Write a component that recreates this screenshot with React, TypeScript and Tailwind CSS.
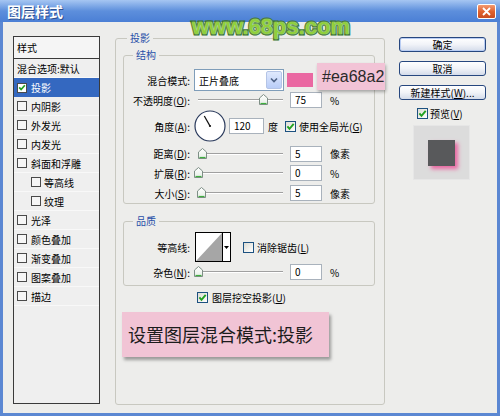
import React from "react";

const Check = ({ checked, list }: { checked?: boolean; list?: boolean }) => (
  <span
    className={
      list
        ? `w-[10px] h-[10px] border border-[#4a4a4a] ${checked ? "bg-white" : "bg-[#f6f6f6]"} flex items-center justify-center shrink-0`
        : "w-[11px] h-[11px] border border-[#1c5180] bg-gradient-to-br from-[#dcdcd4] to-white flex items-center justify-center shrink-0"
    }
  >
    {checked && (
      <svg width="9" height="9" viewBox="0 0 9 9">
        <path d="M1.4 4.4 L3.5 6.8 L7.7 1.9" fill="none" stroke="#21a121" strokeWidth="1.9" />
      </svg>
    )}
  </span>
);

const Slider = ({ pos }: { pos: number }) => (
  <div className="relative w-[92px] h-[16px] shrink-0">
    <div className="absolute left-[4px] right-[3px] top-[7px] h-[2px] border-t border-[#a0a0a0] border-b border-b-white" />
    <svg className="absolute top-[2px]" style={{ left: pos - 4.5 }} width="9" height="11" viewBox="0 0 9 11">
      <defs>
        <linearGradient id="tg" x1="0" y1="0" x2="0" y2="1">
          <stop offset="0" stopColor="#ffffff" />
          <stop offset="1" stopColor="#e6eee6" />
        </linearGradient>
      </defs>
      <path d="M0.5 10.5 V4 L4.5 0.5 L8.5 4 V10.5 Z" fill="url(#tg)" stroke="#7e8f86" />
      <path d="M1.5 9.5 H7.5" stroke="#3fae3f" strokeWidth="1.2" />
    </svg>
  </div>
);

const Input = ({ v, w = "w-[32px]" }: { v: string; w?: string }) => (
  <div className={`${w} h-[16px] border border-[#a9b2bc] bg-white pl-[4px] text-[10px] leading-[14px] shrink-0`}>{v}</div>
);

const Label = ({ children }: { children: React.ReactNode }) => (
  <span className="w-[66px] text-right shrink-0 whitespace-nowrap">{children}</span>
);

const Btn = ({ children, cls = "" }: { children: React.ReactNode; cls?: string }) => (
  <div
    className={`h-[15px] w-[87px] rounded-[3px] border border-[#27477f] bg-gradient-to-b from-[#ffffff] via-[#f1f3f8] to-[#d4dcea] flex items-center justify-center text-[10px] leading-none whitespace-nowrap ${cls}`}
  >
    {children}
  </div>
);

export default function App() {
  return (
    <div className="w-[500px] h-[416px] relative overflow-hidden font-['Noto_Sans_CJK_SC',sans-serif] text-[10px] text-black">
      {/* Title bar */}
      <div className="h-[22px] flex items-center justify-between bg-gradient-to-b from-[#a6c6f2] via-[#5d8fdc] to-[#4b7fd5] pl-[7px] pr-[4px]">
        <span className="text-white font-bold text-[14px] leading-none [text-shadow:1px_1px_0_#2d4f8f]">图层样式</span>
        <div className="w-[19px] h-[15px] rounded-[2px] border border-white bg-gradient-to-b from-[#f39a70] via-[#e0622f] to-[#c94d22] flex items-center justify-center">
          <svg width="9" height="9" viewBox="0 0 9 9">
            <path d="M1 1 L8 8 M8 1 L1 8" stroke="white" strokeWidth="1.8" />
          </svg>
        </div>
      </div>

      {/* Body */}
      <div className="h-[394px] bg-[#ededeb] border-x-[3px] border-b-[3px] border-[#5b87d2] flex items-start pl-[10px]">
        {/* Styles list */}
        <div className="mt-[14px] w-[87px] h-[368px] border border-[#3a3a3a] bg-[#efefef] flex flex-col shrink-0">
          <div className="h-[22px] border-b border-[#3a3a3a] bg-[#f5f5f5] pl-[3px] flex items-center">样式</div>
          <div className="h-[19px] flex items-center pl-[3px] border-b border-[#f8f8f8]">混合选项:默认</div>
          <div className="h-[19px] flex items-center pl-[3px] bg-[#3468c0] text-white">
            <Check list checked />
            <span className="ml-[4px]">投影</span>
          </div>
          {["内阴影", "外发光", "内发光", "斜面和浮雕"].map((t) => (
            <div key={t} className="h-[19px] flex items-center pl-[3px] border-b border-[#f8f8f8]">
              <Check list />
              <span className="ml-[4px]">{t}</span>
            </div>
          ))}
          {["等高线", "纹理"].map((t) => (
            <div key={t} className="h-[19px] flex items-center pl-[17px] border-b border-[#f8f8f8]">
              <Check list />
              <span className="ml-[3px]">{t}</span>
            </div>
          ))}
          {["光泽", "颜色叠加", "渐变叠加", "图案叠加", "描边"].map((t) => (
            <div key={t} className="h-[19px] flex items-center pl-[3px] border-b border-[#f8f8f8]">
              <Check list />
              <span className="ml-[4px]">{t}</span>
            </div>
          ))}
        </div>

        {/* Main fieldset */}
        <fieldset className="ml-[15px] mt-[9px] w-[270px] h-[374px] border border-[#c8c8c0] rounded-[3px] pl-[7px] pr-[8px] shrink-0">
          <legend className="ml-[4px] px-[3px] leading-[14px] text-[#2850a8]">投影</legend>

          <fieldset className="mt-[3px] w-[252px] border border-[#c8c8c0] rounded-[3px]">
            <legend className="ml-[9px] px-[3px] leading-[14px] text-[#2850a8]">结构</legend>

            <div className="mt-[6px] h-[24px] flex items-center">
              <Label>混合模式:</Label>
              <div className="ml-[4px] w-[90px] h-[22px] border border-[#7f9db9] bg-white flex items-center justify-between pl-[4px] pr-[1px]">
                <span>正片叠底</span>
                <div className="w-[16px] h-[18px] rounded-[2px] border border-[#b4c4e6] bg-gradient-to-b from-[#e0e9fd] to-[#b9cdf8] flex items-center justify-center">
                  <svg width="8" height="6" viewBox="0 0 8 6">
                    <path d="M1 1.5 L4 4.5 L7 1.5" fill="none" stroke="#4d6185" strokeWidth="1.6" />
                  </svg>
                </div>
              </div>
              <div className="ml-[3px] w-[26px] h-[14px] bg-[#ea68a2]" />
            </div>

            <div className="h-[16px] flex items-center">
              <Label>
                不透明度(<u>O</u>):
              </Label>
              <div className="ml-[4px]">
                <Slider pos={69} />
              </div>
              <div className="ml-[4px]">
                <Input v="75" />
              </div>
              <span className="ml-[8px]">%</span>
            </div>

            <div className="h-[36px] flex items-center">
              <Label>
                角度(<u>A</u>):
              </Label>
              <svg className="ml-[4px] shrink-0" width="32" height="32" viewBox="0 0 32 32">
                <circle cx="16" cy="16" r="15" fill="white" stroke="#2a3a5c" strokeWidth="1.2" />
                <line x1="16" y1="16" x2="10.3" y2="6" stroke="#111" strokeWidth="1.3" />
                <circle cx="16" cy="16" r="1.1" fill="#111" />
              </svg>
              <div className="ml-[3px]">
                <Input v="120" w="w-[35px]" />
              </div>
              <span className="ml-[4px]">度</span>
              <span className="ml-[7px]">
                <Check checked />
              </span>
              <span className="ml-[3px] whitespace-nowrap">
                使用全局光(<u>G</u>)
              </span>
            </div>

            <div className="h-[19px] flex items-center">
              <Label>
                距离(<u>D</u>):
              </Label>
              <div className="ml-[4px]">
                <Slider pos={8} />
              </div>
              <div className="ml-[4px]">
                <Input v="5" />
              </div>
              <span className="ml-[8px]">像素</span>
            </div>

            <div className="h-[20px] flex items-center">
              <Label>
                扩展(<u>R</u>):
              </Label>
              <div className="ml-[4px]">
                <Slider pos={4} />
              </div>
              <div className="ml-[4px]">
                <Input v="0" />
              </div>
              <span className="ml-[8px]">%</span>
            </div>

            <div className="h-[20px] flex items-center">
              <Label>
                大小(<u>S</u>):
              </Label>
              <div className="ml-[4px]">
                <Slider pos={7} />
              </div>
              <div className="ml-[4px]">
                <Input v="5" />
              </div>
              <span className="ml-[8px]">像素</span>
            </div>
          </fieldset>

          <fieldset className="mt-[10px] w-[252px] border border-[#c8c8c0] rounded-[3px] pb-[3px]">
            <legend className="ml-[9px] px-[3px] leading-[14px] text-[#2850a8]">品质</legend>

            <div className="mt-[4px] h-[30px] flex items-center">
              <Label>等高线:</Label>
              <div className="ml-[5px] w-[36px] h-[30px] border border-black flex shrink-0">
                <svg width="26" height="28" viewBox="0 0 26 28" className="bg-white">
                  <polygon points="0,28 26,0 26,28" fill="#a6a6a6" />
                </svg>
                <div className="flex-1 border-l border-black bg-white flex items-center justify-center">
                  <svg width="5" height="3" viewBox="0 0 5 3">
                    <path d="M0 0 H5 L2.5 3 Z" fill="#000" />
                  </svg>
                </div>
              </div>
              <span className="ml-[12px]">
                <Check />
              </span>
              <span className="ml-[3px] whitespace-nowrap">
                消除锯齿(<u>L</u>)
              </span>
            </div>

            <div className="h-[20px] flex items-center">
              <Label>
                杂色(<u>N</u>):
              </Label>
              <div className="ml-[4px]">
                <Slider pos={4} />
              </div>
              <div className="ml-[4px]">
                <Input v="0" />
              </div>
              <span className="ml-[8px]">%</span>
            </div>
          </fieldset>

          <div className="h-[22px] flex items-center pl-[74px]">
            <Check checked />
            <span className="ml-[4px] whitespace-nowrap">
              图层挖空投影(<u>U</u>)
            </span>
          </div>

          <div className="mt-[4px] -ml-[1px] w-[207px] h-[45px] bg-[#f1c4d5] shadow-[2px_3px_3px_rgba(0,0,0,0.35)] flex items-center pl-[6px] text-[18px] text-[#1c1c1c] whitespace-nowrap">
            设置图层混合模式:投影
          </div>
        </fieldset>

        {/* Right column */}
        <div className="ml-[14px] mt-[15px] w-[87px] flex flex-col shrink-0">
          <Btn cls="shadow-[inset_0_0_0_1px_#b9cdf3]">确定</Btn>
          <Btn cls="mt-[9px]">取消</Btn>
          <Btn cls="mt-[9px]">新建样式(<u>W</u>)...</Btn>
          <div className="mt-[5px] h-[16px] flex items-center pl-[18px]">
            <Check checked />
            <span className="ml-[2px]">
              预览(<u>V</u>)
            </span>
          </div>
          <div className="mt-[4px] ml-[14px] w-[57px] h-[55px] bg-[#dcdcdc] border border-[#e6e6e6] flex items-center justify-center">
            <div className="w-[27px] h-[26px] bg-[#58595b] shadow-[3px_3px_4px_#ea68a2]" />
          </div>
        </div>
      </div>

      {/* Overlays: colour annotation and watermark */}
      <div className="absolute left-[317px] top-[63px] w-[68px] h-[27px] bg-[#f2c3d6] shadow-[1px_2px_3px_rgba(0,0,0,0.3)] flex items-center pl-[5px] font-['Liberation_Sans',sans-serif] text-[16px] text-[#2a2a2a]">
        #ea68a2
      </div>
      <div className="absolute left-[192px] top-[16px] leading-[22px] font-['Liberation_Sans',sans-serif] font-bold text-[22px] text-[#8fd03c] [-webkit-text-stroke:3px_#2f6d1c] [paint-order:stroke_fill] [text-shadow:0_0_2px_#ffffff]">
        www.68ps.com
      </div>
    </div>
  );
}
